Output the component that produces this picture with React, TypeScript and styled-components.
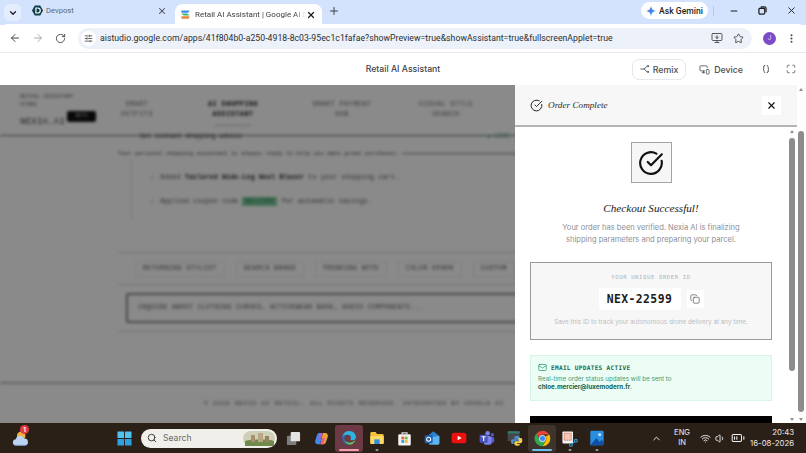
import React from "react";
import styled, { createGlobalStyle } from "styled-components";
import {
  ArrowLeft,
  ArrowRight,
  BatteryMedium,
  ChevronDown,
  ChevronUp,
  CircleCheckBig,
  Copy,
  Mail,
  Maximize,
  Minus,
  MonitorDown,
  MonitorSmartphone,
  MoreVertical,
  Plus,
  RotateCw,
  Search,
  SlidersHorizontal,
  Star,
  Volume1,
  Wifi,
  X,
} from "lucide-react";

const GlobalStyle = createGlobalStyle`
  html, body {
    margin: 0;
    padding: 0;
    overflow: hidden;
    background: #fff;
  }
  * { box-sizing: border-box; }
`;

const Screen = styled.div`
  width: 806px;
  height: 453px;
  display: flex;
  flex-direction: column;
  overflow: hidden;
  font-family: "Inter", "Liberation Sans", sans-serif;
`;

/* browser chrome */
const TabStrip = styled.div`
  height: 25px;
  display: flex;
  align-items: flex-end;
  background: #d3e3fd;
  padding-left: 4px;
`;

const TabMenu = styled.div`
  width: 17px;
  height: 17px;
  margin: 0 8px 4px 0;
  border-radius: 5px;
  background: #e4edfd;
  display: flex;
  align-items: center;
  justify-content: center;
  color: #1f1f1f;
`;

const Tab = styled.div<{ $active?: boolean }>`
  width: ${(p) => (p.$active ? "147px" : "146px")};
  height: ${(p) => (p.$active ? "21px" : "25px")};
  display: flex;
  align-items: center;
  padding: ${(p) => (p.$active ? "0 6px 0 4.5px" : "0 8px 4px 3px")};
  border-radius: 8px 8px 0 0;
  background: ${(p) => (p.$active ? "#fff" : "transparent")};
  color: #46484c;
  margin-right: ${(p) => (p.$active ? "6px" : "0")};
`;

const TabTitle = styled.span<{ $fade?: boolean }>`
  flex: 1;
  margin-left: ${(p) => (p.$fade ? "4.5px" : "3px")};
  font-family: "Roboto", "Liberation Sans", sans-serif;
  font-size: ${(p) => (p.$fade ? "8px" : "7.6px")};
  white-space: nowrap;
  overflow: hidden;
  color: ${(p) => (p.$fade ? "#3c4043" : "#5f6368")};
  ${(p) => (p.$fade ? "mask-image: linear-gradient(90deg, #000 90%, transparent);" : "")}
`;

const NewTab = styled.div`
  height: 25px;
  padding-bottom: 4px;
  display: flex;
  align-items: center;
  color: #3c4043;
`;

const StripRight = styled.div`
  margin-left: auto;
  height: 25px;
  padding-bottom: 4px;
  display: flex;
  align-items: center;
`;

const GeminiPill = styled.div`
  width: 67px;
  height: 17px;
  border-radius: 9px;
  background: #fff;
  display: flex;
  align-items: center;
  justify-content: center;
  gap: 3px;
  font-family: "Roboto", "Liberation Sans", sans-serif;
  font-size: 8.6px;
  font-weight: 500;
  color: #1f1f1f;
`;

const StripDivider = styled.div`
  width: 1px;
  height: 10px;
  margin: 0 5px;
  background: #b4c8e8;
`;

const WindowButton = styled.div`
  width: 29px;
  display: flex;
  justify-content: center;
  color: #1f1f1f;
`;

const Toolbar = styled.div`
  height: 29px;
  background: #fff;
  display: flex;
  align-items: center;
  padding: 0 0 0 4px;
  border-bottom: 1px solid #e8eaed;
  border-radius: 8px 8px 0 0;
  margin-top: -1px;
`;

const NavButton = styled.div<{ $off?: boolean }>`
  width: 22.5px;
  display: flex;
  justify-content: center;
  color: ${(p) => (p.$off ? "#a9acb0" : "#474747")};
`;

const Omnibox = styled.div`
  width: 674px;
  height: 21px;
  margin-left: 6.5px;
  border-radius: 11px;
  background: #edf2fa;
  display: flex;
  align-items: center;
  padding: 0 8px 0 3px;
  color: #474747;
`;

const SiteChip = styled.div`
  width: 15px;
  height: 15px;
  border-radius: 50%;
  background: #fff;
  display: flex;
  align-items: center;
  justify-content: center;
`;

const UrlText = styled.span`
  flex: 1;
  margin-left: 4px;
  font-family: "Roboto", "Liberation Sans", sans-serif;
  font-size: 8.68px;
  letter-spacing: 0.035px;
  color: #2b2d30;
  white-space: nowrap;
`;

const OmniActions = styled.div`
  display: flex;
  align-items: center;
  gap: 10px;
`;

const Avatar = styled.div`
  width: 13px;
  height: 13px;
  margin-left: 11px;
  border-radius: 50%;
  background: #7e4bc8;
  color: #e6d8fa;
  font-size: 6.5px;
  display: flex;
  align-items: center;
  justify-content: center;
`;

const ChromeMenu = styled.div`
  width: 30px;
  display: flex;
  justify-content: center;
  color: #474747;
`;

const AppBar = styled.div`
  height: 32px;
  background: #fff;
  display: flex;
  align-items: center;
  justify-content: flex-end;
  position: relative;
  color: #3c4043;
  padding-right: 10px;
`;

const AppTitle = styled.div`
  position: absolute;
  left: 0;
  right: 0;
  text-align: center;
  font-size: 8.7px;
  font-weight: 500;
  color: #3f4246;
`;

const RemixButton = styled.div`
  width: 54px;
  height: 21px;
  border: 1px solid #e6e7e9;
  border-radius: 7px;
  display: flex;
  align-items: center;
  justify-content: center;
  gap: 3px;
  font-size: 8.8px;
  font-weight: 500;
  color: #4a4d52;
`;

const DeviceButton = styled.div`
  display: flex;
  align-items: center;
  gap: 4px;
  margin-left: 13px;
  font-size: 8.8px;
  font-weight: 500;
  color: #4a4d52;
`;

const BarIcon = styled.div<{ $gap: number }>`
  display: flex;
  margin-left: ${(p) => p.$gap}px;
  color: #5f6368;
`;

/* main area */
const Body = styled.div`
  height: 338px;
  display: flex;
  background: #fff;
  overflow: hidden;
`;

const Stage = styled.div`
  position: relative;
  width: 515px;
  overflow: hidden;
  background: #fff;
`;

const Dim = styled.div`
  position: absolute;
  inset: 0;
  background: rgba(0, 0, 0, 0.46);
`;

const BlurPage = styled.div`
  width: 700px;
  height: 338px;
  display: flex;
  flex-direction: column;
  filter: blur(1.4px);
  font-family: "Liberation Mono", monospace;
  color: #333;
`;

const PageHeader = styled.div`
  height: 51px;
  flex-shrink: 0;
  display: flex;
  align-items: flex-start;
  border-bottom: 1px solid #666;
  padding: 8px 0 0 20px;
`;

const LogoBlock = styled.div`
  width: 88px;
  font-size: 5.6px;
  line-height: 8px;
  color: #666;
`;

const LogoRow = styled.div`
  display: flex;
  align-items: center;
  margin-top: 7px;
  font-size: 9.4px;
  line-height: 11px;
  color: #444;
`;

const LogoBadge = styled.span`
  background: #111;
  color: #bbb;
  width: 29px;
  height: 11px;
  margin: -10px 0 0 2px;
  border-radius: 2px;
  font-size: 5px;
  line-height: 11px;
  text-align: center;
`;

const PageNav = styled.div<{ $width: number; $active?: boolean }>`
  width: ${(p) => p.$width}px;
  margin-top: 7px;
  text-align: center;
  font-size: 6.6px;
  line-height: ${(p) => (p.$active ? "9.5px" : "10px")};
  letter-spacing: 0.6px;
  font-weight: ${(p) => (p.$active ? 700 : 400)};
  color: ${(p) => (p.$active ? "#111" : "#666")};
  white-space: pre-line;
`;

const Main = styled.div`
  margin-left: 118px;
  width: 582px;
  display: flex;
  flex-direction: column;
`;

const Intro = styled.div`
  display: flex;
  font-size: 6.3px;
  margin: -5px 0 0 22px;
  height: 11px;
  line-height: 11px;
  color: #333;
  white-space: nowrap;
`;

const IntroStatus = styled.span`
  margin-left: 245px;
  color: #3a9a6a;
`;

const IntroLine = styled.div`
  height: 11px;
  margin-top: 5.5px;
  display: flex;
  align-items: center;
  font-size: 5.56px;
  letter-spacing: 0.1px;
  white-space: nowrap;
  color: #444;
`;

const IntroRule = styled.div`
  flex: 1;
  height: 1px;
  margin-left: 3px;
  background: #777;
`;

const ListCard = styled.div`
  margin-left: 13px;
  height: 60px;
  border-left: 1px solid #d8d8d8;
  padding: 15px 0 0 18px;
  display: flex;
  flex-direction: column;
  gap: 16px;
`;

const ListRow = styled.div`
  display: flex;
  align-items: center;
  gap: 6px;
  height: 8px;
  font-size: 6.6px;
  letter-spacing: 0.16px;
  color: #555;
  white-space: pre;
  b { color: #222; }
`;

const ListTick = styled.span`
  color: #4a9;
`;

const DealTag = styled.span`
  background: #7fcf9f;
  color: #2a7a50;
  padding: 1px 3px;
`;

const ChipTray = styled.div`
  margin-top: 33.5px;
  height: 33px;
  display: flex;
  align-items: center;
  gap: 11px;
  padding-left: 17px;
  border: solid #d4d4d4;
  border-width: 1px 0;
`;

const Chip = styled.div`
  height: 16px;
  padding: 0 7px;
  border: 1px solid #ececec;
  font-size: 6.4px;
  line-height: 14px;
  letter-spacing: 0.5px;
  color: #555;
  white-space: nowrap;
`;

const PromptBox = styled.div`
  margin: 8px 0 0 8px;
  height: 30px;
  border: 2px solid #8a8a8a;
  border-radius: 2px;
  padding-left: 10px;
  font-size: 6.4px;
  line-height: 26px;
  letter-spacing: 0.42px;
  color: #555;
  white-space: nowrap;
`;

const MainRule = styled.div`
  height: 1px;
  margin-top: 8px;
  background: #d4d4d4;
`;

const PageFooter = styled.div`
  margin-top: auto;
  height: 41px;
  border-top: 2px solid #bbb;
  padding: 16px 0 0 204px;
  font-size: 6.2px;
  letter-spacing: 0.7px;
  color: #666;
  white-space: nowrap;
`;

/* order drawer */
const Drawer = styled.div`
  width: 282px;
  display: flex;
  flex-direction: column;
  background: #fff;
`;

const DrawerHead = styled.div`
  height: 42px;
  flex-shrink: 0;
  background: #f7f7f7;
  border-bottom: 2px solid #b5b5b5;
  display: flex;
  align-items: center;
  padding: 0 16px 0 15px;
  color: #222;
`;

const DrawerTitle = styled.span`
  flex: 1;
  margin-left: 5px;
  font-family: "Liberation Serif", serif;
  font-style: italic;
  font-size: 9.2px;
  color: #2a2a2a;
`;

const CloseButton = styled.div`
  width: 19px;
  height: 19px;
  background: #fff;
  display: flex;
  align-items: center;
  justify-content: center;
  color: #111;
`;

const DrawerBody = styled.div`
  flex: 1;
  min-height: 0;
  display: flex;
`;

const Content = styled.div`
  flex: 1;
  min-width: 0;
  overflow: hidden;
  padding: 15px 16px 0 15px;
  display: flex;
  flex-direction: column;
  align-items: center;
`;

const SuccessBadge = styled.div`
  width: 41px;
  height: 41px;
  flex-shrink: 0;
  border: 1px solid #a3a3a3;
  background: #f6f6f6;
  display: flex;
  align-items: center;
  justify-content: center;
  color: #111;
`;

const SuccessTitle = styled.h2`
  margin: 17px 0 0;
  font-family: "Liberation Serif", serif;
  font-style: italic;
  font-weight: 400;
  font-size: 11.2px;
  line-height: 17px;
  color: #1c1c1c;
`;

const SuccessText = styled.p`
  margin: 5px 0 0;
  width: 190px;
  text-align: center;
  font-size: 7.55px;
  line-height: 12.4px;
  color: #8b9098;
`;

const OrderBox = styled.div`
  margin-top: 15px;
  width: 242px;
  height: 78px;
  flex-shrink: 0;
  border: 1px solid #9a9a9a;
  background: #f7f7f8;
  display: flex;
  flex-direction: column;
  align-items: center;
  padding-top: 10px;
`;

const OrderLabel = styled.div`
  font-family: "DejaVu Sans Mono", monospace;
  font-size: 5.6px;
  line-height: 8px;
  letter-spacing: 0.6px;
  color: #b0b3b8;
`;

const OrderRow = styled.div`
  display: flex;
  align-items: center;
  gap: 6px;
  margin-top: 7px;
`;

const OrderId = styled.div`
  width: 82px;
  height: 22px;
  background: #fff;
  text-align: center;
  font-family: "DejaVu Sans Mono", monospace;
  font-weight: 700;
  font-size: 11.4px;
  line-height: 22px;
  letter-spacing: 0.4px;
  color: #1b1b1b;
`;

const CopyButton = styled.div`
  width: 17px;
  height: 18px;
  background: #fff;
  display: flex;
  align-items: center;
  justify-content: center;
  color: #6b6f76;
`;

const OrderHint = styled.div`
  margin-top: 7px;
  font-size: 6.3px;
  line-height: 11px;
  color: #babdc2;
`;

const EmailBox = styled.div`
  margin-top: 15px;
  width: 242px;
  height: 46px;
  flex-shrink: 0;
  background: #ecfdf5;
  border: 1px solid #d6f5e6;
  padding: 7px 7px 0;
  color: #2e8d68;
`;

const EmailHead = styled.div`
  display: flex;
  align-items: center;
  gap: 4px;
  font-family: "DejaVu Sans Mono", monospace;
  font-weight: 700;
  font-size: 6.1px;
  line-height: 9px;
  letter-spacing: 0.3px;
  color: #1c6a4e;
`;

const EmailText = styled.div`
  margin-top: 3px;
  font-size: 6.25px;
  line-height: 8.3px;
  color: #3f9a77;
  b { font-weight: 700; color: #136146; }
`;

const PayButton = styled.div`
  margin-top: 15px;
  width: 242px;
  height: 30px;
  flex-shrink: 0;
  background: #000;
`;

const Scroll = styled.div`
  width: 9px;
  flex-shrink: 0;
  background: #fff;
  position: relative;
`;

const ScrollThumb = styled.div<{ $top: number; $height: number }>`
  position: absolute;
  top: ${(p) => p.$top}px;
  left: 1px;
  width: 6px;
  height: ${(p) => p.$height}px;
  border-radius: 3px;
  background: #8c8c8c;
`;

const ScrollArrow = styled.div<{ $down?: boolean; $top?: number; $bottom?: number }>`
  position: absolute;
  left: 1.5px;
  ${(p) => (p.$top !== undefined ? `top: ${p.$top}px;` : `bottom: ${p.$bottom}px;`)}
  width: 0;
  height: 0;
  border-left: 2.5px solid transparent;
  border-right: 2.5px solid transparent;
  ${(p) =>
    p.$down ? "border-top: 3.5px solid #8f8f8f;" : "border-bottom: 3.5px solid #8f8f8f;"}
`;

/* taskbar */
const Taskbar = styled.div`
  height: 30px;
  flex-shrink: 0;
  background: #2b2018;
  display: flex;
  align-items: center;
  color: #eee;
`;

const Weather = styled.div`
  position: relative;
  width: 117px;
  padding-left: 12px;
  display: flex;
  align-items: center;
`;

const NotifyDot = styled.span`
  position: absolute;
  left: 20px;
  top: -5px;
  width: 9px;
  height: 9px;
  border-radius: 50%;
  background: #e03a3e;
  color: #fff;
  font-size: 6px;
  font-weight: 700;
  line-height: 9px;
  text-align: center;
`;

const SearchPill = styled.div`
  width: 136px;
  height: 19px;
  margin: 0 3px 0 9px;
  border-radius: 10px;
  background: #f1efe9;
  display: flex;
  align-items: center;
  padding: 0 2px 0 6px;
  color: #333;
  font-size: 8.6px;
  span {
    flex: 1;
    margin-left: 6px;
    color: #6b6b6b;
  }
`;

const TaskSlot = styled.div<{ $state?: "edge" | "on" }>`
  position: relative;
  width: 27.6px;
  height: 27px;
  display: flex;
  align-items: center;
  justify-content: center;
  border-radius: 3px;
  background: ${(p) =>
    p.$state === "edge" ? "#6c3a44" : p.$state === "on" ? "#3e342c" : "transparent"};
`;

const RunMark = styled.span<{ $color: string; $wide: boolean }>`
  position: absolute;
  bottom: 1px;
  left: 50%;
  transform: translateX(-50%);
  width: ${(p) => (p.$wide ? "20px" : "3px")};
  height: 2px;
  border-radius: 1px;
  background: ${(p) => p.$color};
`;

const Tray = styled.div`
  margin-left: auto;
  display: flex;
  align-items: center;
  padding-right: 12px;
  color: #f0f0f0;
`;

const Lang = styled.div`
  width: 30px;
  margin-left: 5px;
  text-align: center;
  font-size: 7.6px;
  line-height: 10.5px;
`;

const TrayIcon = styled.div<{ $gap: number }>`
  display: flex;
  margin-left: ${(p) => p.$gap}px;
`;

const Clock = styled.div`
  margin-left: 5px;
  text-align: right;
  font-size: 7.8px;
  line-height: 11px;
  color: #e8e8e8;
`;

const ChromeLogo = ({ size = 16 }: { size?: number }) => (
  <svg width={size} height={size} viewBox="0 0 24 24">
    <path d="M12 1a11 11 0 0 1 9.5 5.5H12a5.5 5.5 0 0 0-5.2 3.6L3.4 5A11 11 0 0 1 12 1z" fill="#e94235" />
    <path d="M21.5 6.5A11 11 0 0 1 12 23l4.7-8.2A5.5 5.5 0 0 0 16.6 9l4.9-2.5z" fill="#fbbc04" />
    <path d="M12 23A11 11 0 0 1 3.4 5l4.7 8.6A5.5 5.5 0 0 0 16.7 14.8L12 23z" fill="#34a853" />
    <circle cx="12" cy="12" r="4.4" fill="#4285f4" stroke="#fff" strokeWidth="1.2" />
  </svg>
);

const EdgeLogo = () => (
  <svg width="16" height="16" viewBox="0 0 24 24">
    <path d="M2 12C2 5.5 7 1.5 12.5 1.5c6 0 10 4.5 10 9.5 0 3-2.5 4.500-5 4.500-2 0-3.300-.7-3.300-1.600 0-.6.8-1 .8-2.400 0-2.400-2.400-4.200-5-4.200C6 7.300 2.800 9 2 12z" fill="#2bb5e0" />
    <path d="M2 12c.8-3 4-4.700 7-4.700-2.500 1-4 3.200-4 6 0 4.200 3.500 8 8.500 8.700C7.500 23.500 2 18.500 2 12z" fill="#1a6fc9" />
    <path d="M13.500 22c-5-.7-8.500-4.500-8.500-8.700 0 3.200 3 5.700 7.500 5.700 3.500 0 6.500-1 9-3.500-1.200 3.700-4.500 6.500-8 6.500z" fill="#5dd05a" />
  </svg>
);

const WinLogo = () => (
  <svg width="15" height="15" viewBox="0 0 16 16">
    <g fill="#4fc3f0">
      <rect x="0.5" y="0.500" width="7" height="7" rx="0.6" />
      <rect x="8.5" y="0.500" width="7" height="7" rx="0.6" />
      <rect x="0.5" y="8.500" width="7" height="7" rx="0.6" fill="#2f9fe0" />
      <rect x="8.5" y="8.500" width="7" height="7" rx="0.6" fill="#2f9fe0" />
    </g>
  </svg>
);

const TaskView = () => (
  <svg width="15" height="15" viewBox="0 0 16 16">
    <rect x="1" y="5" width="10" height="10" rx="1" fill="#7d7d7d" />
    <rect x="5" y="1" width="10" height="10" rx="1" fill="#e4e4e4" />
  </svg>
);

const Copilot = () => (
  <svg width="15" height="15" viewBox="0 0 24 24">
    <path d="M9 3h4l-3 18H6C3 21 1 18 2 15l3-9c.6-2 2-3 4-3z" fill="#3f8be8" />
    <path d="M15 21h-4l3-18h4c3 0 5 3 4 6l-3 9c-.6 2-2 3-4 3z" fill="#f0a030" />
    <path d="M9 3h5l-2 8-6 3 3-11z" fill="#a85fd8" />
    <path d="M15 21h-5l2-8 6-3-3 11z" fill="#e85f8f" />
  </svg>
);

const Explorer = () => (
  <svg width="16" height="16" viewBox="0 0 24 24">
    <path d="M2 5a2 2 0 0 1 2-2h6l2 3h8a2 2 0 0 1 2 2v12H2z" fill="#f5c33b" />
    <rect x="2" y="9" width="20" height="12" rx="1" fill="#ffd964" />
    <rect x="8" y="14" width="8" height="7" fill="#2f8fd8" />
  </svg>
);

const Store = () => (
  <svg width="15" height="15" viewBox="0 0 24 24">
    <rect x="2" y="5" width="20" height="18" rx="2" fill="#f4f4f4" />
    <path d="M8 5V3h8v2" fill="none" stroke="#ddd" strokeWidth="2" />
    <rect x="7" y="9" width="4.500" height="4.500" fill="#ea5a3c" />
    <rect x="12.500" y="9" width="4.500" height="4.500" fill="#7fba3a" />
    <rect x="7" y="14.500" width="4.500" height="4.500" fill="#2f9fe0" />
    <rect x="12.500" y="14.500" width="4.500" height="4.500" fill="#f4b92a" />
  </svg>
);

const Outlook = () => (
  <svg width="16" height="16" viewBox="0 0 24 24">
    <path d="M5 9l9-7 9 7v10H8z" fill="#2a7fd0" />
    <path d="M8 11l15-2v11a2 2 0 0 1-2 2H8z" fill="#5fb4ec" />
    <rect x="1" y="8" width="12" height="12" rx="2" fill="#1a5fb0" />
    <circle cx="7" cy="14" r="3" fill="none" stroke="#fff" strokeWidth="1.600" />
  </svg>
);

const YouTube = () => (
  <svg width="16" height="16" viewBox="0 0 24 24">
    <rect x="1" y="4" width="22" height="16" rx="4" fill="#ee0f0f" />
    <path d="M10 8.500v7l6-3.500z" fill="#fff" />
  </svg>
);

const Teams = () => (
  <svg width="16" height="16" viewBox="0 0 24 24">
    <circle cx="13" cy="5" r="3.500" fill="#7b83eb" />
    <circle cx="20" cy="7" r="2.500" fill="#5059c9" />
    <rect x="15" y="10" width="8" height="9" rx="3" fill="#5059c9" />
    <rect x="7" y="9" width="12" height="13" rx="3" fill="#7b83eb" />
    <rect x="1" y="7" width="12" height="12" rx="1.500" fill="#4b53bc" />
    <path d="M4 10h6M7 10v6.500" stroke="#fff" strokeWidth="1.600" />
  </svg>
);

const PythonApp = () => (
  <svg width="16" height="16" viewBox="0 0 24 24">
    <rect x="1" y="2" width="18" height="15" rx="1.500" fill="#45494e" />
    <rect x="1" y="2" width="18" height="3" fill="#2f7f70" />
    <path d="M15 9c-3 0-4 1-4 3v1h5v1H9c-2 0-3 1-3 3.500S7 21 9 21h1v-2c0-2 1-3 3-3h4c1.500 0 2-1 2-2v-2c0-2-1-3-4-3z" fill="#4d8fd0" />
    <path d="M17 12h3c2 0 3 1 3 3.500S22 20 20 20h-5v1h4v1c0 1-2 1.500-4 1.500s-4-.5-4-2.500v-2c0-1 1-2 2-2h4c1 0 1-1 1-2z" fill="#f5cf4a" />
  </svg>
);

const SnipTool = () => (
  <svg width="17" height="17" viewBox="0 0 24 24">
    <rect x="2" y="2" width="15" height="17" rx="1.500" fill="#f3f3f3" />
    <rect x="4.500" y="4.500" width="10" height="10" fill="#f4c6b8" stroke="#d9472b" strokeDasharray="2 1" />
    <circle cx="14" cy="21" r="2" fill="none" stroke="#3aa0d8" strokeWidth="1.500" />
    <circle cx="21" cy="15" r="2" fill="none" stroke="#3aa0d8" strokeWidth="1.500" />
    <path d="M15 20l5-4" stroke="#3aa0d8" strokeWidth="1.500" />
  </svg>
);

const Photos = () => (
  <svg width="16" height="16" viewBox="0 0 24 24">
    <path d="M4 1h16a2 2 0 0 1 2 2v18a2 2 0 0 1-2 2H2V3a2 2 0 0 1 2-2z" fill="#2a8fe0" />
    <path d="M2 23l9-11 5 6 3-3 3 3v3a2 2 0 0 1-2 2z" fill="#0f4fa8" />
    <circle cx="16" cy="7" r="2.200" fill="#cfeaff" />
  </svg>
);

const WeatherIcon = () => (
  <svg width="17" height="17" viewBox="0 0 24 24">
    <circle cx="13" cy="8" r="6" fill="#f0b040" />
    <path d="M6 22a4.500 4.500 0 0 1-.5-9A6 6 0 0 1 17 12a5 5 0 0 1 1 10z" fill="#bcd4f4" />
    <path d="M6 22a4.500 4.500 0 0 1-3-1.200h18A5 5 0 0 1 18 22z" fill="#7fa8e0" />
  </svg>
);

const SearchScene = () => (
  <svg width="32" height="15" viewBox="0 0 32 15">
    <rect width="32" height="15" rx="7.500" fill="#cfd0b8" />
    <path d="M2 10c6-2 24-2 29 0v5H2z" fill="#6f8a4a" />
    <rect x="8" y="4" width="4" height="7" fill="#a89070" />
    <rect x="15" y="2" width="5" height="9" fill="#bca684" />
    <rect x="22" y="5" width="4" height="6" fill="#98845f" />
  </svg>
);

const GeminiStar = () => (
  <svg width="10" height="10" viewBox="0 0 24 24">
    <defs>
      <linearGradient id="gem" x1="0" y1="0" x2="1" y2="1">
        <stop offset="0" stopColor="#ea4335" />
        <stop offset="0.45" stopColor="#4285f4" />
        <stop offset="1" stopColor="#34a8d8" />
      </linearGradient>
    </defs>
    <path d="M12 0c1 7 5 11 12 12-7 1-11 5-12 12-1-7-5-11-12-12 7-1 11-5 12-12z" fill="url(#gem)" />
  </svg>
);

const DevpostIcon = () => (
  <svg width="11" height="11" viewBox="0 0 24 24">
    <path d="M6 1h12l6 11-6 11H6L0 12z" fill="#0f3d4a" />
    <path d="M8.500 6.500h4a5.500 5.500 0 0 1 0 11h-4z" fill="none" stroke="#fff" strokeWidth="2.600" />
  </svg>
);

const StudioIcon = () => (
  <svg width="11" height="11" viewBox="0 0 24 24">
    <path d="M3 3h18l-3 5H3z" fill="#3b8ce8" />
    <path d="M3 10h13l5 4H8z" fill="#3fb46a" />
    <path d="M3 16h18l-2 5H3z" fill="#e8873b" />
  </svg>
);

const RemixIcon = () => (
  <svg width="10" height="10" viewBox="0 0 24 24" fill="none" stroke="currentColor" strokeWidth="2.200" strokeLinecap="round">
    <path d="M2 12h8l6-6M10 12l6 6" />
    <circle cx="19" cy="5" r="1.500" />
    <circle cx="19" cy="19" r="1.500" />
  </svg>
);

const FitIcon = () => (
  <svg width="10" height="10" viewBox="0 0 24 24" fill="none" stroke="currentColor" strokeWidth="2.400" strokeLinecap="round">
    <path d="M9 3C5 7 5 17 9 21M15 3c4 4 4 14 0 18" />
    <path d="M6 6l3-3M18 18l-3 3" />
  </svg>
);

const taskApps: { key: string; icon: React.ReactNode; state?: "edge" | "on"; mark?: string; wide?: boolean }[] = [
  { key: "view", icon: <TaskView /> },
  { key: "copilot", icon: <Copilot /> },
  { key: "edge", icon: <EdgeLogo />, state: "edge", mark: "#f2a0b0", wide: true },
  { key: "files", icon: <Explorer />, mark: "#9a9a9a" },
  { key: "store", icon: <Store /> },
  { key: "outlook", icon: <Outlook /> },
  { key: "youtube", icon: <YouTube /> },
  { key: "teams", icon: <Teams /> },
  { key: "python", icon: <PythonApp /> },
  { key: "chrome", icon: <ChromeLogo size={17} />, state: "on", mark: "#6ac0ea", wide: true },
  { key: "snip", icon: <SnipTool />, mark: "#9a9a9a" },
  { key: "photos", icon: <Photos />, mark: "#9a9a9a" },
];

const chips = ["RETURNING STYLIST", "SEARCH BRAND", "TRENDING NOTE", "COLOR  SPARK", "CUSTOM"];

export default function App() {
  return (
    <Screen>
      <GlobalStyle />

      <TabStrip>
        <TabMenu>
          <ChevronDown size={10} strokeWidth={3} />
        </TabMenu>
        <Tab>
          <DevpostIcon />
          <TabTitle>Devpost</TabTitle>
          <X size={10} strokeWidth={2.5} />
        </Tab>
        <Tab $active>
          <StudioIcon />
          <TabTitle $fade>Retail AI Assistant | Google AI S</TabTitle>
          <X size={10} strokeWidth={3} color="#1f1f1f" />
        </Tab>
        <NewTab>
          <Plus size={12} strokeWidth={2} />
        </NewTab>
        <StripRight>
          <GeminiPill>
            <GeminiStar />
            Ask Gemini
          </GeminiPill>
          <StripDivider />
          <WindowButton>
            <Minus size={10} strokeWidth={2.5} />
          </WindowButton>
          <WindowButton>
            <svg width="9" height="9" viewBox="0 0 10 10" fill="none" stroke="currentColor" strokeWidth="1.400">
              <rect x="1" y="2.500" width="6.500" height="6.500" rx="1.500" />
              <path d="M3 1h4a2 2 0 0 1 2 2v4" />
            </svg>
          </WindowButton>
          <WindowButton>
            <X size={11} strokeWidth={2} />
          </WindowButton>
        </StripRight>
      </TabStrip>

      <Toolbar>
        <NavButton>
          <ArrowLeft size={12} strokeWidth={2} />
        </NavButton>
        <NavButton $off>
          <ArrowRight size={12} strokeWidth={2} />
        </NavButton>
        <NavButton>
          <RotateCw size={11} strokeWidth={2} />
        </NavButton>
        <Omnibox>
          <SiteChip>
            <SlidersHorizontal size={9} strokeWidth={2.2} />
          </SiteChip>
          <UrlText>
            aistudio.google.com/apps/41f804b0-a250-4918-8c03-95ec1c1fafae?showPreview=true&amp;showAssistant=true&amp;fullscreenApplet=true
          </UrlText>
          <OmniActions>
            <MonitorDown size={12} strokeWidth={1.8} />
            <Star size={11} strokeWidth={2} />
          </OmniActions>
        </Omnibox>
        <Avatar>J</Avatar>
        <ChromeMenu>
          <MoreVertical size={11} strokeWidth={2.4} />
        </ChromeMenu>
      </Toolbar>

      <AppBar>
        <AppTitle>Retail AI Assistant</AppTitle>
        <RemixButton>
          <RemixIcon />
          Remix
        </RemixButton>
        <DeviceButton>
          <MonitorSmartphone size={11} strokeWidth={1.8} />
          Device
        </DeviceButton>
        <BarIcon $gap={18}>
          <FitIcon />
        </BarIcon>
        <BarIcon $gap={15}>
          <Maximize size={10} strokeWidth={2} />
        </BarIcon>
      </AppBar>

      <Body>
        <Stage>
          <BlurPage>
            <PageHeader>
              <LogoBlock>
                RETAIL ASSISTANT
                <br />
                STORE
                <LogoRow>
                  NEXIA.AI
                  <LogoBadge>BETA</LogoBadge>
                </LogoRow>
              </LogoBlock>
              <PageNav $width={58}>{"SMART\nOUTFITS"}</PageNav>
              <PageNav $width={134} $active>{"AI SHOPPING\nASSISTANT\n________"}</PageNav>
              <PageNav $width={84}>{"SMART PAYMENT\nHUB"}</PageNav>
              <PageNav $width={124}>{"VISUAL STYLE\nSEARCH"}</PageNav>
            </PageHeader>
            <Main>
              <Intro>
                Get instant shopping advice
                <IntroStatus>● LIVE</IntroStatus>
              </Intro>
              <IntroLine>
                Your personal shopping assistant is always ready to help you make great purchases.
                <IntroRule />
              </IntroLine>
              <ListCard>
                <ListRow>
                  <ListTick>✓</ListTick>
                  <span>
                    Added <b>Tailored Wide-Leg Wool Blazer</b> to your shopping cart.
                  </span>
                </ListRow>
                <ListRow>
                  <ListTick>✓</ListTick>
                  <span>
                    Applied coupon code <DealTag>WELCOME</DealTag> for automatic savings.
                  </span>
                </ListRow>
              </ListCard>
              <ChipTray>
                {chips.map((c) => (
                  <Chip key={c}>{c}</Chip>
                ))}
              </ChipTray>
              <PromptBox>INQUIRE ABOUT CLOTHING CURVES, ACTIVEWEAR BASE, AUDIO COMPONENTS...</PromptBox>
              <MainRule />
            </Main>
            <PageFooter>© 2026 NEXIA AI RETAIL. ALL RIGHTS RESERVED. INTEGRATED BY GOOGLE AI</PageFooter>
          </BlurPage>
          <Dim />
        </Stage>

        <Drawer>
          <DrawerHead>
            <CircleCheckBig size={13} strokeWidth={1.8} />
            <DrawerTitle>Order Complete</DrawerTitle>
            <CloseButton>
              <X size={11} strokeWidth={2.4} />
            </CloseButton>
          </DrawerHead>
          <DrawerBody>
            <Content>
              <SuccessBadge>
                <CircleCheckBig size={26} strokeWidth={2} />
              </SuccessBadge>
              <SuccessTitle>Checkout Successful!</SuccessTitle>
              <SuccessText>
                Your order has been verified. Nexia AI is finalizing shipping parameters and preparing your parcel.
              </SuccessText>
              <OrderBox>
                <OrderLabel>YOUR UNIQUE ORDER ID</OrderLabel>
                <OrderRow>
                  <OrderId>NEX-22599</OrderId>
                  <CopyButton>
                    <Copy size={10} strokeWidth={2} />
                  </CopyButton>
                </OrderRow>
                <OrderHint>Save this ID to track your autonomous drone delivery at any time.</OrderHint>
              </OrderBox>
              <EmailBox>
                <EmailHead>
                  <Mail size={9} strokeWidth={2} color="#2e9d72" />
                  EMAIL UPDATES ACTIVE
                </EmailHead>
                <EmailText>
                  Real-time order status updates will be sent to
                  <br />
                  <b>chloe.mercier@luxemodern.fr</b>.
                </EmailText>
              </EmailBox>
              <PayButton />
            </Content>
            <Scroll>
              <ScrollArrow $top={3} />
              <ScrollThumb $top={11} $height={233} />
              <ScrollArrow $down $bottom={2} />
            </Scroll>
          </DrawerBody>
        </Drawer>

        <Scroll>
          <ScrollArrow $top={3} />
          <ScrollThumb $top={46} $height={281} />
          <ScrollArrow $down $bottom={2} />
        </Scroll>
      </Body>

      <Taskbar>
        <Weather>
          <WeatherIcon />
          <NotifyDot>1</NotifyDot>
        </Weather>
        <WinLogo />
        <SearchPill>
          <Search size={10} strokeWidth={2.2} />
          <span>Search</span>
          <SearchScene />
        </SearchPill>
        {taskApps.map((a) => (
          <TaskSlot key={a.key} $state={a.state}>
            {a.icon}
            {a.mark && <RunMark $color={a.mark} $wide={!!a.wide} />}
          </TaskSlot>
        ))}
        <Tray>
          <ChevronUp size={11} strokeWidth={2} />
          <Lang>
            ENG
            <br />
            IN
          </Lang>
          <TrayIcon $gap={3}>
            <Wifi size={11} strokeWidth={2} />
          </TrayIcon>
          <TrayIcon $gap={4}>
            <Volume1 size={11} strokeWidth={2} />
          </TrayIcon>
          <TrayIcon $gap={5}>
            <BatteryMedium size={14} strokeWidth={1.8} />
          </TrayIcon>
          <Clock>
            20:43
            <br />
            16-08-2026
          </Clock>
        </Tray>
      </Taskbar>
    </Screen>
  );
}
